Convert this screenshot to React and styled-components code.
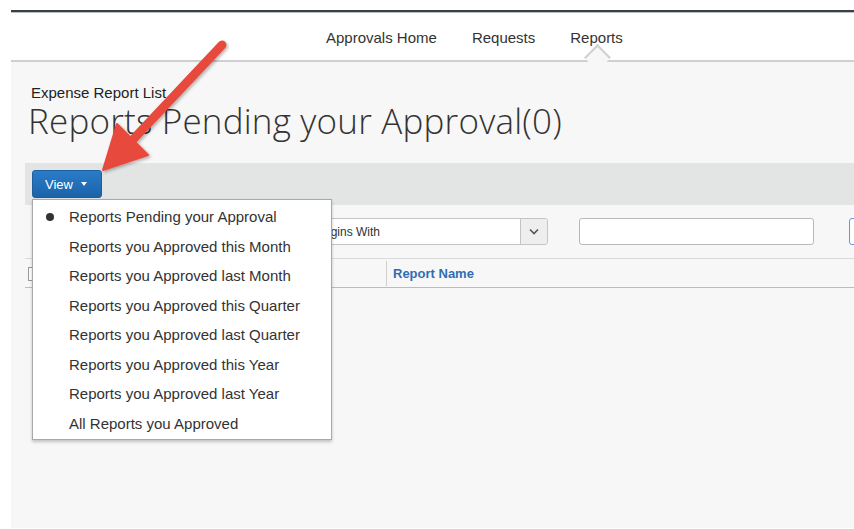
import React from 'react';
import styled, { createGlobalStyle } from 'styled-components';

const GlobalStyle = createGlobalStyle`
  html, body {
    margin: 0;
    padding: 0;
    background: #ffffff;
    height: 100%;
    overflow: hidden;
  }
  body {
    font-family: 'Liberation Sans', Arial, sans-serif;
    color: #333;
  }
`;

const Page = styled.div`
  position: relative;
  height: 100vh;
  padding: 10px 0 1px 11px;
  box-sizing: border-box;
  display: flex;
  flex-direction: column;
`;

const Header = styled.header`
  flex-shrink: 0;
  height: 48px;
  background: #fff;
  border-top: 2px solid #3b3f47;
  border-bottom: 2px solid #d0d0d0;
  box-shadow: inset 0 1px 0 #b9bcc1;
  display: flex;
  align-items: center;
  padding-left: 315px;
  gap: 35px;
`;

const NavItem = styled.a`
  position: relative;
  font-size: 15px;
  color: #333;
  text-decoration: none;
  padding-top: 3px;

  ${p => p.$active && `
    &::after {
      content: '';
      position: absolute;
      left: 50%;
      bottom: -21px;
      width: 17px;
      height: 17px;
      margin-left: -9px;
      background: #f7f7f7;
      border-top: 2px solid #d0d0d0;
      border-left: 2px solid #d0d0d0;
      transform: rotate(45deg);
    }
  `}
`;

const Main = styled.main`
  flex: 1;
  min-width: 0;
  background: #f7f7f7;
  padding-left: 14px;
  display: flex;
  flex-direction: column;
  overflow: hidden;
`;

const Heading = styled.div`
  padding: 23px 0 0 6px;
`;

const Eyebrow = styled.div`
  font-size: 15px;
  line-height: 16px;
  color: #222;
`;

const Title = styled.h1`
  margin: 1px 0 0 -3px;
  font-family: 'Open Sans', 'Liberation Sans', sans-serif;
  font-weight: 300;
  font-size: 35px;
  line-height: 38px;
  letter-spacing: 0.2px;
  color: #333;
  white-space: nowrap;
`;

const Toolbar = styled.div`
  margin-top: 23px;
  height: 42px;
  box-sizing: border-box;
  background: #e3e4e4;
  padding: 7px;
`;

const ViewMenu = styled.div`
  position: relative;
  display: inline-block;
`;

const ViewButton = styled.button`
  height: 28px;
  width: 70px;
  border: 1px solid #1b5f9f;
  border-radius: 3px;
  background: linear-gradient(#2a7cc9, #1b63a9);
  color: #fff;
  font-family: 'Liberation Sans', Arial, sans-serif;
  font-size: 13px;
  display: flex;
  align-items: center;
  gap: 8px;
  padding: 0 0 0 12px;
  cursor: pointer;
`;

const Caret = styled.span`
  width: 0;
  height: 0;
  border-left: 3px solid transparent;
  border-right: 3px solid transparent;
  border-top: 4px solid #fff;
`;

const Menu = styled.ul`
  position: absolute;
  z-index: 5;
  top: 29px;
  left: 0;
  width: 300px;
  box-sizing: border-box;
  margin: 0;
  padding: 2px 0 1px;
  list-style: none;
  background: #fff;
  border: 1px solid #a9a9a9;
  box-shadow: 0 2px 3px rgba(0, 0, 0, 0.22);
`;

const MenuItem = styled.li`
  display: flex;
  align-items: center;
  height: 29.5px;
  padding-left: 13px;
  font-size: 15px;
  color: #333;
  white-space: nowrap;
`;

const Marker = styled.span`
  width: 23px;
  flex-shrink: 0;
  display: flex;
  align-items: center;

  &::before {
    content: '';
    width: 8px;
    height: 8px;
    border-radius: 50%;
    background: ${p => (p.$on ? '#333' : 'transparent')};
  }
`;

const FilterRow = styled.div`
  display: flex;
  align-items: center;
  height: 53px;
  padding-left: 15px;
  & > * {
    flex-shrink: 0;
  }
`;

const Select = styled.div`
  width: ${p => p.$w}px;
  margin-right: ${p => p.$gap}px;
  height: 27px;
  box-sizing: border-box;
  display: flex;
  background: #fff;
  border: 1px solid #c4c4c4;
  border-radius: 3px;
  font-size: 12px;
  color: #333;
`;

const SelectText = styled.span`
  flex: 1;
  display: flex;
  align-items: center;
  padding-left: 5px;
`;

const SelectArrow = styled.span`
  width: 26px;
  display: flex;
  align-items: center;
  justify-content: center;
  background: #eeeeee;
  border-left: 1px solid #c4c4c4;
  border-radius: 0 2px 2px 0;
`;

const TextInput = styled.input`
  width: 235px;
  height: 27px;
  margin-right: 35px;
  box-sizing: border-box;
  border: 1px solid #b8b8b8;
  border-radius: 3px;
  background: #fff;
`;

const GoButton = styled.button`
  width: 60px;
  height: 27px;
  border: 1px solid #5a9ad8;
  border-radius: 3px;
  background: #fff;
`;

const TableHead = styled.div`
  display: flex;
  height: 28px;
  border-top: 1px solid #dadada;
  border-bottom: 1px solid #bcbcbc;
`;

const CheckCell = styled.div`
  width: 362px;
  display: flex;
  align-items: center;
  padding-left: 3px;
  box-sizing: border-box;
  border-right: 1px solid #cfcfcf;
  margin: 2px 0 1px;
`;

const Checkbox = styled.span`
  width: 12px;
  height: 12px;
  border: 1px solid #999;
  background: #fff;
`;

const HeadCell = styled.div`
  display: flex;
  align-items: center;
  padding-left: 6px;
  font-size: 13px;
  font-weight: bold;
  color: #2f6db3;
`;

const Callout = styled.svg`
  position: absolute;
  left: 0;
  top: 0;
  pointer-events: none;
  z-index: 10;
  overflow: visible;
`;

const views = [
  'Reports Pending your Approval',
  'Reports you Approved this Month',
  'Reports you Approved last Month',
  'Reports you Approved this Quarter',
  'Reports you Approved last Quarter',
  'Reports you Approved this Year',
  'Reports you Approved last Year',
  'All Reports you Approved',
];

export default function App() {
  return (
    <>
      <GlobalStyle />
      <Page>
        <Header>
          <NavItem>Approvals Home</NavItem>
          <NavItem>Requests</NavItem>
          <NavItem $active>Reports</NavItem>
        </Header>

        <Main>
          <Heading>
            <Eyebrow>Expense Report List</Eyebrow>
            <Title>Reports Pending your Approval(0)</Title>
          </Heading>

          <Toolbar>
            <ViewMenu>
              <ViewButton>
                View <Caret />
              </ViewButton>
              <Menu>
                {views.map((v, i) => (
                  <MenuItem key={v}>
                    <Marker $on={i === 0} />
                    {v}
                  </MenuItem>
                ))}
              </Menu>
            </ViewMenu>
          </Toolbar>

          <FilterRow>
            <Select $w={258} $gap={12}>
              <SelectText>Report Name</SelectText>
              <SelectArrow />
            </Select>
            <Select $w={238} $gap={31}>
              <SelectText>Begins With</SelectText>
              <SelectArrow>
                <svg width="10" height="7" viewBox="0 0 10 7">
                  <path d="M1 1.5l4 4 4-4" fill="none" stroke="#555" strokeWidth="1.6" />
                </svg>
              </SelectArrow>
            </Select>
            <TextInput />
            <GoButton />
          </FilterRow>

          <TableHead>
            <CheckCell>
              <Checkbox />
            </CheckCell>
            <HeadCell>Report Name</HeadCell>
          </TableHead>
        </Main>

        <Callout width="854" height="529" viewBox="0 0 854 529">
          <defs>
            <filter id="callout-shadow" x="-20%" y="-20%" width="140%" height="140%">
              <feDropShadow dx="1.5" dy="1.5" stdDeviation="1.5" floodColor="#000" floodOpacity="0.3" />
            </filter>
          </defs>
          <g filter="url(#callout-shadow)" fill="#e8483e" stroke="#e8483e">
            <line x1="222" y1="45" x2="126" y2="147" strokeWidth="9" strokeLinecap="round" />
            <path d="M103 170 L148 155 L117 124 Z" strokeWidth="2" strokeLinejoin="round" />
          </g>
        </Callout>
      </Page>
    </>
  );
}
